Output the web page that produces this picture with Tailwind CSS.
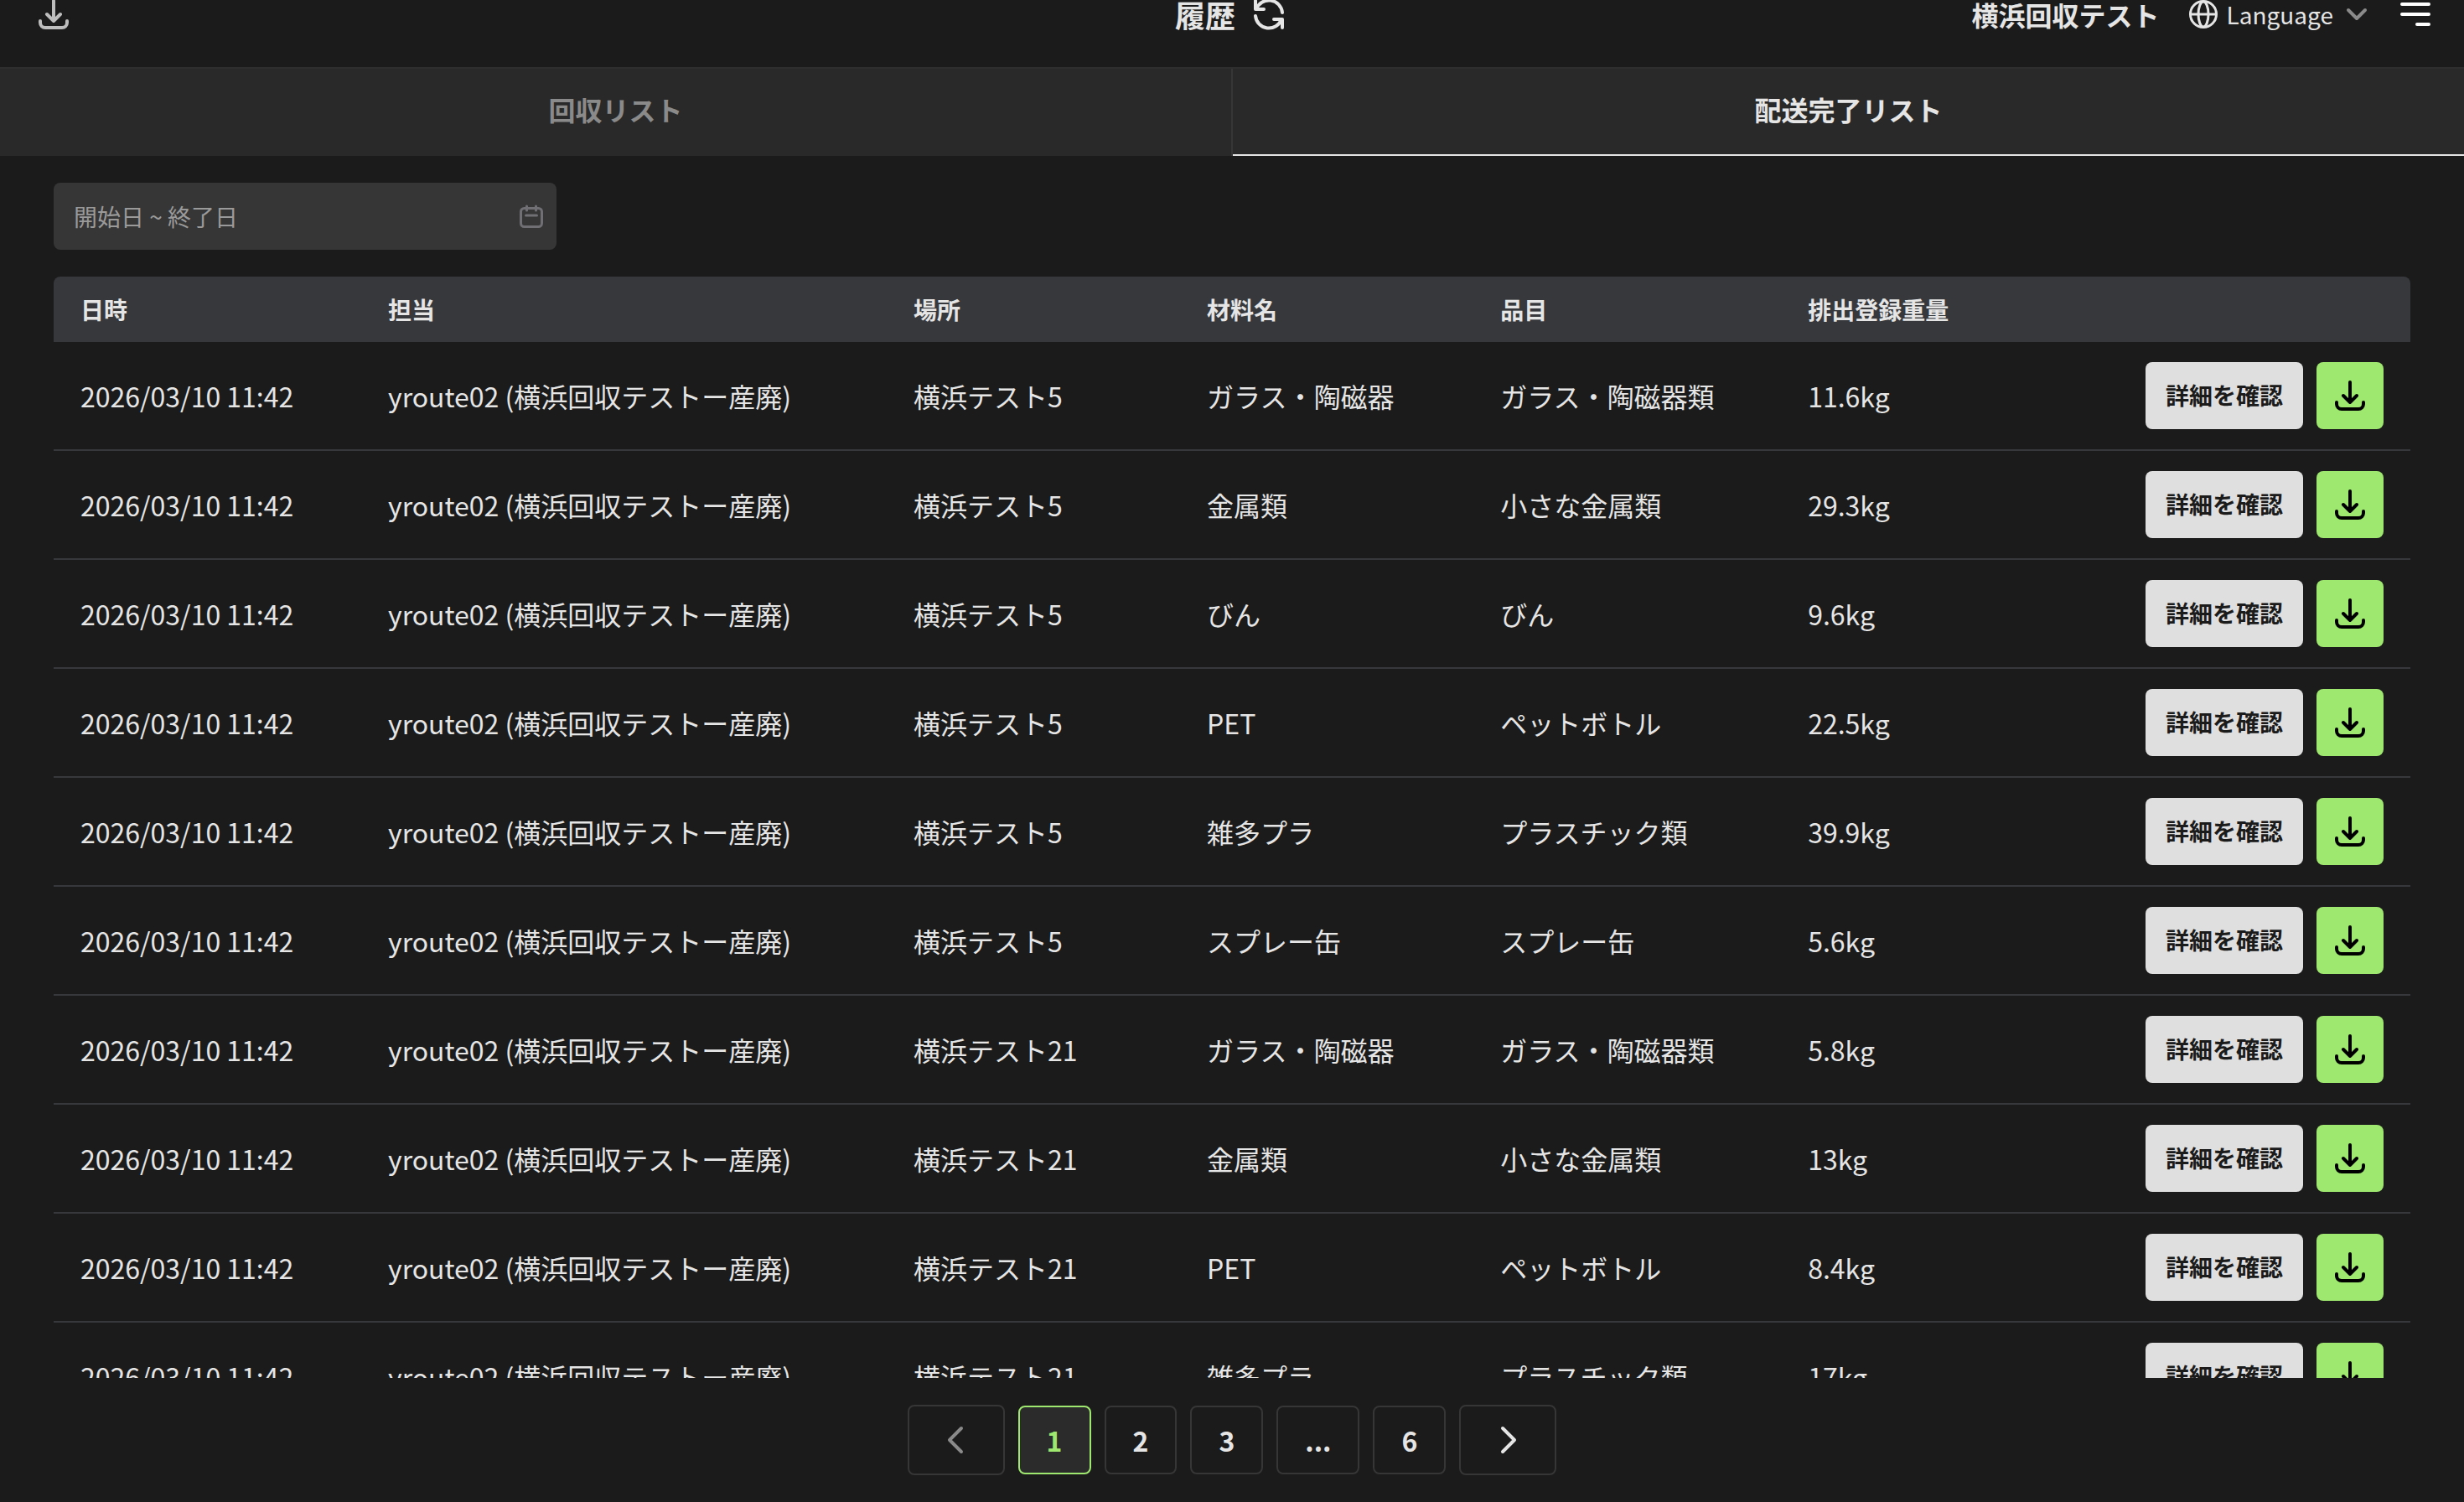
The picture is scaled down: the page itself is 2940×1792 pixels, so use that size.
<!DOCTYPE html>
<html lang="ja">
<head>
  <meta charset="UTF-8">
  <meta name="viewport" content="width=device-width, initial-scale=1.0">
  <title>履歴</title>
  <script src="https://cdn.jsdelivr.net/npm/@tailwindcss/browser@4"></script>
</head>
<body class="bg-[#1b1b1b] text-[#e5e5e5] font-['Noto_Sans_CJK_JP',sans-serif] h-screen flex flex-col overflow-hidden text-[32px] leading-[48px]">
  <svg class="hidden">
    <symbol id="download" viewBox="0 0 40 40" fill="none" stroke="currentColor" stroke-width="4" stroke-linecap="round" stroke-linejoin="round">
      <path d="M20 4v24M12 20l8 8 8-8M4 28v2a6 6 0 0 0 6 6h20a6 6 0 0 0 6-6v-2"/>
    </symbol>
  </svg>

  <header class="-mt-[7px] h-[87px] shrink-0 grid grid-cols-3 items-start px-8">
    <button aria-label="ダウンロード" class="w-16 h-12 flex items-center justify-center text-[#bdbdbd]">
      <svg class="w-10 h-10"><use href="#download"/></svg>
    </button>
    <h1 class="flex items-center justify-center gap-4 text-[36px] leading-[48px] font-bold">履歴
      <button aria-label="更新">
        <svg class="w-12 h-12" viewBox="0 0 48 48" fill="none" stroke="currentColor" stroke-width="4" stroke-linecap="round" stroke-linejoin="round">
          <path d="M8 8v10h10M40 40V30H30M40 22A16 16 0 0 0 9 18M8 26a16 16 0 0 0 31 4"/>
        </svg>
      </button>
    </h1>
    <div class="flex items-center justify-end">
      <span class="font-bold">横浜回収テスト</span>
      <button class="flex items-center ml-8 text-[28px]">
        <svg class="w-10 h-10 mr-2" viewBox="0 0 40 40" fill="none" stroke="currentColor" stroke-width="3">
          <circle cx="20" cy="20" r="15.5"/><ellipse cx="20" cy="20" rx="6" ry="15"/><path d="M5 20h30"/>
        </svg>
        Language
        <svg class="w-8 h-8 ml-3 text-[#8a8a8a]" viewBox="0 0 32 32" fill="none" stroke="currentColor" stroke-width="4" stroke-linecap="round" stroke-linejoin="round"><path d="M6 11l10 10 10-10"/></svg>
      </button>
      <button aria-label="メニュー" class="ml-8">
        <svg class="w-12 h-12 text-white" viewBox="0 0 48 48" fill="none" stroke="currentColor" stroke-width="4" stroke-linecap="round"><path d="M6 12h32M6 24h32M24 36h14"/></svg>
      </button>
    </div>
  </header>

  <nav class="shrink-0 flex border-t-2 border-[#2e2e2e] bg-[#292929] font-bold">
    <button class="flex-1 h-[104px] pb-2 border-r-2 border-[#363636] text-[#8a8a8a]">回収リスト</button>
    <button class="flex-1 h-[104px] pb-[6px] border-b-2 border-[#e5e5e5]">配送完了リスト</button>
  </nav>

  <main class="grow min-h-0 flex flex-col px-16 pt-8">
    <div class="shrink-0 flex items-center w-[600px] h-20 rounded-lg bg-[#363636] pl-6 pr-3">
      <input type="text" aria-label="期間" placeholder="開始日 ~ 終了日" class="grow min-w-0 text-[28px] outline-none placeholder:text-[#9a9a9a]">
      <svg class="w-9 h-9 text-[#6f6f74]" viewBox="0 0 36 36" fill="none" stroke="currentColor" stroke-width="3" stroke-linecap="round" stroke-linejoin="round">
        <rect x="5.5" y="8.5" width="25" height="22" rx="4"/><path d="M12.5 6v5M23.5 6v5M11.5 17h13"/>
      </svg>
    </div>

    <div class="grow min-h-0 overflow-y-auto [scrollbar-width:none] mt-8">
      <table class="w-full table-fixed text-left border-separate border-spacing-0">
        <colgroup>
          <col class="w-[13.05%]"><col class="w-[22.3%]"><col class="w-[12.45%]"><col class="w-[12.45%]"><col class="w-[13.05%]"><col><col class="w-[348px]">
        </colgroup>
        <thead class="bg-[#37383c] text-[28px] leading-[42px]">
          <tr>
            <th class="h-[78px] pl-8 rounded-tl-lg">日時</th>
            <th class="pl-8">担当</th>
            <th class="pl-8">場所</th>
            <th class="pl-8">材料名</th>
            <th class="pl-8">品目</th>
            <th class="pl-8">排出登録重量</th>
            <th class="rounded-tr-lg"></th>
          </tr>
        </thead>
        <tbody id="rows"></tbody>
      </table>
    </div>
  </main>

  <nav aria-label="ページ" class="shrink-0 flex items-center justify-center gap-4 pt-8 pb-8 font-bold">
    <button aria-label="前へ" disabled class="w-[116px] h-[84px] flex items-center justify-center rounded-lg border-2 border-[#363636] text-[#8a8a8a]">
      <svg class="w-10 h-10" viewBox="0 0 40 40" fill="none" stroke="currentColor" stroke-width="4" stroke-linecap="round" stroke-linejoin="round"><path d="M26 6L12 20l14 14"/></svg>
    </button>
    <button class="h-[82px] px-8 rounded-lg border-2 border-[#9fe870] bg-[#2b2b2b] text-[#9fe870]">1</button>
    <button class="h-[82px] px-8 rounded-lg border-2 border-[#363636]">2</button>
    <button class="h-[82px] px-8 rounded-lg border-2 border-[#363636]">3</button>
    <button class="h-[82px] px-8 rounded-lg border-2 border-[#363636]">...</button>
    <button class="h-[82px] px-8 rounded-lg border-2 border-[#363636]">6</button>
    <button aria-label="次へ" class="w-[116px] h-[84px] flex items-center justify-center rounded-lg border-2 border-[#363636]">
      <svg class="w-10 h-10" viewBox="0 0 40 40" fill="none" stroke="currentColor" stroke-width="4" stroke-linecap="round" stroke-linejoin="round"><path d="M14 6l14 14-14 14"/></svg>
    </button>
  </nav>

  <script>
    const items = [
      ['横浜テスト5', 'ガラス・陶磁器', 'ガラス・陶磁器類', '11.6kg'],
      ['横浜テスト5', '金属類', '小さな金属類', '29.3kg'],
      ['横浜テスト5', 'びん', 'びん', '9.6kg'],
      ['横浜テスト5', 'PET', 'ペットボトル', '22.5kg'],
      ['横浜テスト5', '雑多プラ', 'プラスチック類', '39.9kg'],
      ['横浜テスト5', 'スプレー缶', 'スプレー缶', '5.6kg'],
      ['横浜テスト21', 'ガラス・陶磁器', 'ガラス・陶磁器類', '5.8kg'],
      ['横浜テスト21', '金属類', '小さな金属類', '13kg'],
      ['横浜テスト21', 'PET', 'ペットボトル', '8.4kg'],
      ['横浜テスト21', '雑多プラ', 'プラスチック類', '17kg'],
    ];

    document.getElementById('rows').innerHTML = items.map(item => {
      const cells = ['2026/03/10 11:42', 'yroute02 (横浜回収テストー産廃)', ...item];
      return `
        <tr>
          ${cells.map(text => `<td class="pl-8 border-b-2 border-[#37383c] whitespace-nowrap">${text}</td>`).join('')}
          <td class="h-[130px] pr-8 border-b-2 border-[#37383c]">
            <div class="flex justify-end gap-4">
              <button class="h-20 px-6 pb-[2px] rounded-lg bg-[#dfdfdf] text-[#1b1b1b] text-[28px] font-bold">詳細を確認</button>
              <button aria-label="ダウンロード" class="w-20 h-20 flex items-center justify-center rounded-lg bg-[#9fe870] text-black">
                <svg class="w-10 h-10"><use href="#download"/></svg>
              </button>
            </div>
          </td>
        </tr>`;
    }).join('');
  </script>
</body>
</html>
